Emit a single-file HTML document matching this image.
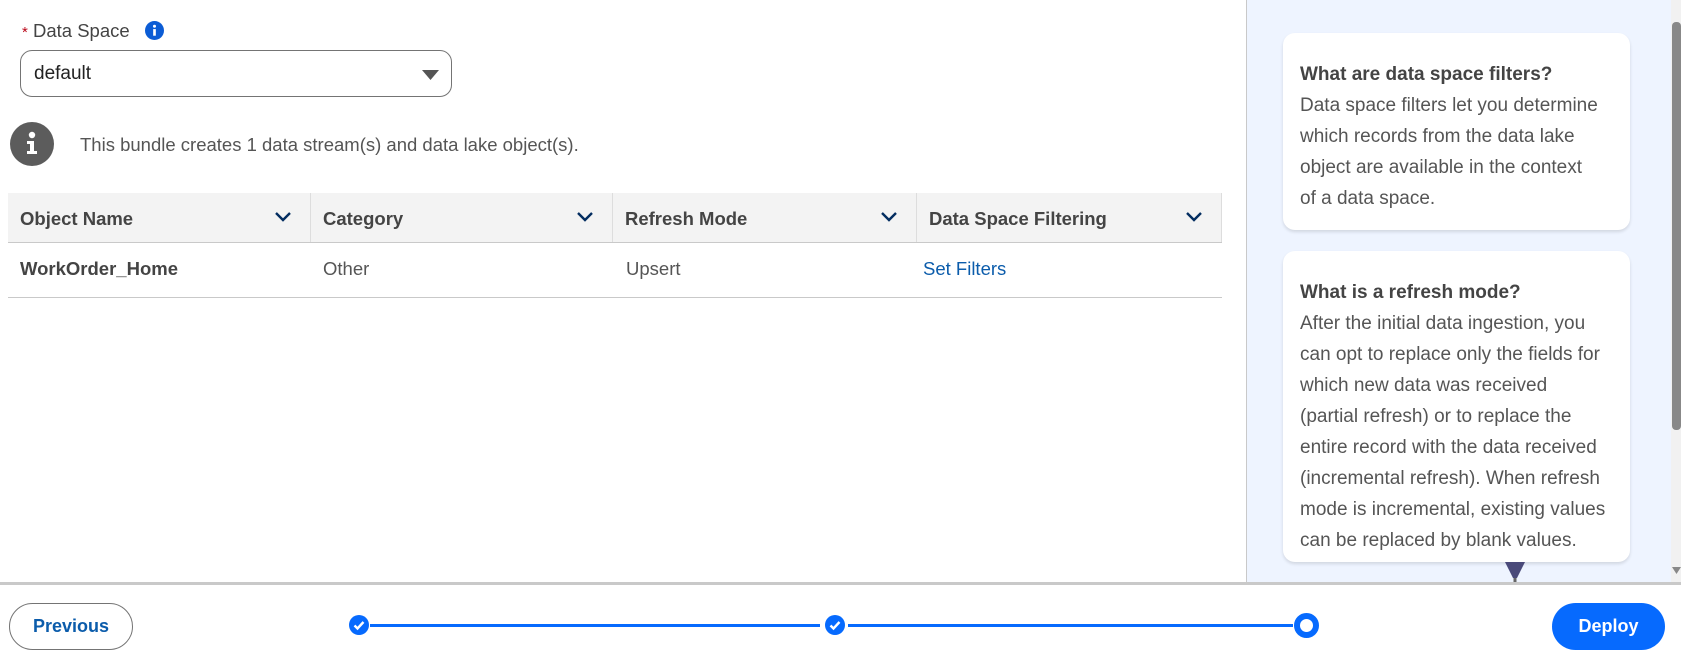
<!DOCTYPE html>
<html><head><meta charset="utf-8"><style>
*{box-sizing:border-box;margin:0;padding:0}
body{width:1681px;height:660px;overflow:hidden;background:#fff;font-family:"Liberation Sans",sans-serif;color:#444;position:relative}
.abs{position:absolute}
.th{position:absolute;top:193px;height:49px;background:#f3f3f3;font-weight:bold;font-size:18.5px;color:#444;padding:15px 0 0 12px;border-right:1px solid #ddd}
.th svg{position:absolute;right:18px;top:18px}
.td{position:absolute;top:258px;font-size:18.5px;color:#555}
.card{position:absolute;left:1283px;width:347px;background:#fff;border-radius:12px;box-shadow:0 2px 3px rgba(0,0,0,.12);padding:0 22px 0 17px;font-size:19px;line-height:31px;color:#555}
.card b{color:#444}
</style></head><body>
<div class="abs" style="left:22px;top:20px;font-size:18.5px;color:#444"><span style="color:#ba0517;font-size:15px">*</span> Data Space</div>
<svg class="abs" style="left:145px;top:21px" width="19" height="19" viewBox="0 0 20 20"><circle cx="10" cy="10" r="10" fill="#0b5cd5"/><rect x="8.6" y="8.5" width="2.8" height="7" fill="#fff"/><circle cx="10" cy="5.5" r="1.6" fill="#fff"/></svg>
<div class="abs" style="left:20px;top:50px;width:432px;height:47px;border:1px solid #747474;border-radius:12px;font-size:19px;color:#222;padding:12px 0 0 13px">default</div>
<svg class="abs" style="left:422px;top:70px" width="17" height="10"><path d="M0 0H17L8.5 10Z" fill="#555"/></svg>
<svg class="abs" style="left:10px;top:122px" width="44" height="44" viewBox="0 0 44 44"><circle cx="22" cy="22" r="22" fill="#5c5c5c"/><circle cx="22" cy="13" r="3.2" fill="#fff"/><path d="M17 19h7v10h3v3H17v-3h3v-7h-3z" fill="#fff"/></svg>
<div class="abs" style="left:80px;top:134px;font-size:18.5px;color:#555">This bundle creates 1 data stream(s) and data lake object(s).</div>
<div class="th" style="left:8px;width:303px">Object Name<svg width="18" height="11"><path d="M2 2l7 7 7-7" stroke="#032d60" stroke-width="2.4" fill="none"/></svg></div>
<div class="th" style="left:311px;width:302px">Category<svg width="18" height="11"><path d="M2 2l7 7 7-7" stroke="#032d60" stroke-width="2.4" fill="none"/></svg></div>
<div class="th" style="left:613px;width:304px">Refresh Mode<svg width="18" height="11"><path d="M2 2l7 7 7-7" stroke="#032d60" stroke-width="2.4" fill="none"/></svg></div>
<div class="th" style="left:917px;width:305px">Data Space Filtering<svg width="18" height="11"><path d="M2 2l7 7 7-7" stroke="#032d60" stroke-width="2.4" fill="none"/></svg></div>
<div class="abs" style="left:8px;top:242px;width:1214px;height:56px;border-top:1px solid #c9c9c9;border-bottom:1px solid #c9c9c9"></div>
<div class="td" style="left:20px;font-weight:bold;color:#444">WorkOrder_Home</div>
<div class="td" style="left:323px">Other</div>
<div class="td" style="left:626px">Upsert</div>
<div class="td" style="left:923px;color:#0b5cab">Set Filters</div>
<div class="abs" style="left:1246px;top:0;width:425px;height:583px;background:#eef4ff;border-left:1px solid #c9c9c9"></div>
<div class="card" style="top:33px;height:197px;padding-top:26px;padding-right:28px"><b>What are data space filters?</b><br>Data space filters let you determine which records from the data lake object are available in the context of a data space.</div>
<div class="card" style="top:251px;height:311px;padding-top:26px"><b>What is a refresh mode?</b><br>After the initial data ingestion, you can opt to replace only the fields for which new data was received (partial refresh) or to replace the entire record with the data received (incremental refresh). When refresh mode is incremental, existing values can be replaced by blank values.</div>
<svg class="abs" style="left:1502px;top:562px" width="26" height="21"><path d="M3 0H23L15 16H11Z" fill="#4a4a7a"/><path d="M11.5 16h3v5h-3z" fill="#666"/></svg>
<div class="abs" style="left:1671px;top:0;width:10px;height:583px;background:#f1f1f1"></div>
<div class="abs" style="left:1672px;top:22px;width:9px;height:408px;background:#888;border-radius:4px"></div>
<svg class="abs" style="left:1672px;top:567px" width="9" height="8"><path d="M0 0H9L4.5 7Z" fill="#888"/></svg>
<div class="abs" style="left:0;top:582px;width:1681px;height:3px;background:#c9c9c9"></div>
<div class="abs" style="left:9px;top:603px;width:124px;height:47px;border:1px solid #747474;border-radius:24px;color:#0b5cab;font-weight:bold;font-size:18px;text-align:center;line-height:45px">Previous</div>
<div class="abs" style="left:370px;top:624px;width:450px;height:3px;background:#066afe"></div>
<div class="abs" style="left:848px;top:624px;width:445px;height:3px;background:#066afe"></div>
<svg class="abs" style="left:349px;top:615px" width="20" height="20"><circle cx="10" cy="10" r="10" fill="#066afe"/><path d="M5.5 10.5l3 3 6-6.5" stroke="#fff" stroke-width="2.4" fill="none"/></svg>
<svg class="abs" style="left:825px;top:615px" width="20" height="20"><circle cx="10" cy="10" r="10" fill="#066afe"/><path d="M5.5 10.5l3 3 6-6.5" stroke="#fff" stroke-width="2.4" fill="none"/></svg>
<svg class="abs" style="left:1294px;top:613px" width="25" height="25"><circle cx="12.5" cy="12.5" r="9.5" fill="#fff" stroke="#066afe" stroke-width="6"/></svg>
<div class="abs" style="left:1552px;top:603px;width:113px;height:47px;background:#066afe;border-radius:24px;color:#fff;font-weight:bold;font-size:18px;text-align:center;line-height:47px">Deploy</div>
</body></html>
